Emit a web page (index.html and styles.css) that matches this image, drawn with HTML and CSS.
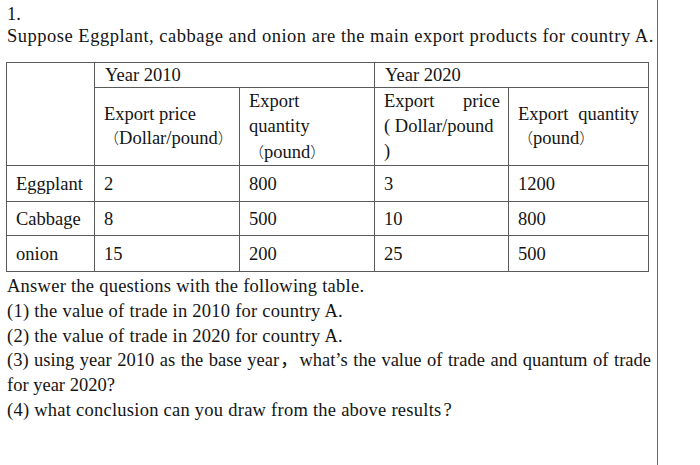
FILE: index.html
```html
<!DOCTYPE html>
<html>
<head>
<meta charset="utf-8">
<link rel="stylesheet" href="styles.css">
</head>
<body>
<div class="page">
  <p class="line num">1.</p>
  <p class="line intro">Suppose Eggplant, cabbage and onion are the main export products for country A.</p>
  <table class="data">
    <colgroup>
      <col class="c1"><col class="c2"><col class="c3"><col class="c4"><col class="c5">
    </colgroup>
    <tr class="h1">
      <td rowspan="2"></td>
      <td colspan="2" class="year">Year 2010</td>
      <td colspan="2" class="year">Year 2020</td>
    </tr>
    <tr class="h2">
      <td class="mid">Export price<br><span class="fw">（</span>Dollar/pound<span class="fw">）</span></td>
      <td class="top">Export<br>quantity<br><span class="fw">（</span>pound<span class="fw">）</span></td>
      <td class="top tight"><span class="just">Export price</span>(&nbsp;Dollar/pound<br>)</td>
      <td class="mid"><span class="just">Export quantity</span><span class="fw">（</span>pound<span class="fw">）</span></td>
    </tr>
    <tr class="r1"><td>Eggplant</td><td>2</td><td>800</td><td>3</td><td>1200</td></tr>
    <tr class="r2"><td>Cabbage</td><td>8</td><td>500</td><td>10</td><td>800</td></tr>
    <tr class="r3"><td>onion</td><td>15</td><td>200</td><td>25</td><td>500</td></tr>
  </table>
  <div class="questions">
    <p class="line sp">Answer the questions with the following table.</p>
    <p class="line sp">(1) the value of trade in 2010 for country A.</p>
    <p class="line sp">(2) the value of trade in 2020 for country A.</p>
    <p class="line">(3) using year 2010 as the base year，what’s the value of trade and quantum of trade for year 2020?</p>
    <p class="line sp">(4) what conclusion can you draw from the above results<span class="q">?</span></p>
  </div>
</div>
</body>
</html>
```
FILE: styles.css
```css
html, body {
  margin: 0;
  padding: 0;
  background: #fff;
}
body {
  font-family: "Liberation Serif", "Times New Roman", "Noto Sans CJK SC", serif;
  font-size: 18.5px;
  color: #141414;
}
.page {
  width: 658px;
  min-height: 465px;
  box-sizing: border-box;
  border-right: 1px solid #6a6a6a;
  padding: 3px 0 0 7px;
}
.line {
  margin: 0;
  line-height: 23px;
}
.num {
  line-height: 22px;
}
.intro {
  letter-spacing: 0.5px;
}
.data {
  border-collapse: collapse;
  table-layout: fixed;
  width: 642px;
  margin: 14px 0 0 -1px;
  line-height: 24px;
  font-family: "Liberation Serif", "Times New Roman", serif;
  font-size: 18.5px;
}
.data td {
  border: 1px solid #5a5a5a;
  padding: 0 9px;
  vertical-align: middle;
  text-align: left;
}
.c1 { width: 88px; }
.c2 { width: 145px; }
.c3 { width: 135px; }
.c4 { width: 134px; }
.c5 { width: 140px; }
.h1 td { height: 24px; }
.h1 .year { padding-left: 10px; }
.h2 td { height: 74px; }
.h2 td.top { vertical-align: top; padding-top: 1px; line-height: 25px; }
.h2 td.tight { padding-right: 8px; }
.h2 td.mid { line-height: 23px; }
.just {
  display: block;
  text-align: justify;
  text-align-last: justify;
}
.fw {
  font-family: "Noto Sans CJK SC", sans-serif;
  font-weight: 300;
  font-size: 15px;
}
.r1 td { height: 35px; }
.r2 td { height: 33px; }
.r3 td { height: 35px; }
.questions {
  margin-top: 2px;
  width: 644px;
  text-align: justify;
}
.questions .line {
  line-height: 24.8px;
}
.questions .sp {
  letter-spacing: 0.25px;
}
.q {
  margin-left: 2px;
}
```
